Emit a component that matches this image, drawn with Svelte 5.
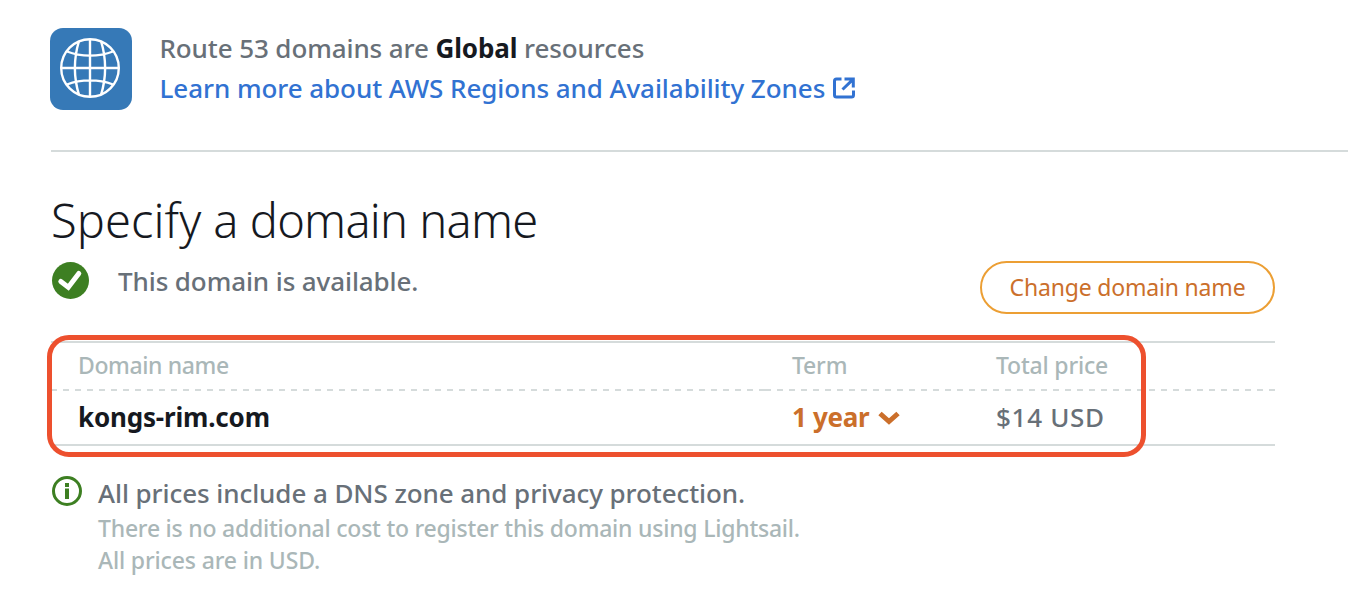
<script>
	let domain = 'kongs-rim.com';
	let term = '1 year';
	let price = '$14 USD';
</script>

<main>
	<header>
		<svg class="globe" viewBox="0 0 82 82" aria-hidden="true">
			<rect width="82" height="82" rx="13" fill="#3679b7" />
			<g fill="none" stroke="#fff" stroke-width="2.4">
				<circle cx="40" cy="40" r="28.8" />
				<path d="M40 11v58M11 40h58M29 13C23.500 31 23.500 49 29 67M51 13C56.500 31 56.500 49 51 67M17 23.500C31 29 49 29 63 23.500M17 56.500C31 51 49 51 63 56.500" />
			</g>
		</svg>
		<div class="intro">
			<p class="scope">Route 53 domains are <b>Global</b> resources</p>
			<a href="#regions">
				<span>Learn more about AWS Regions and Availability Zones</span>
				<svg class="external" viewBox="0 0 22 22" fill="none" stroke="currentColor" stroke-width="3">
					<path d="M8.500 2H3.500Q1.500 2 1.500 4V18Q1.500 20 3.500 20H18.500Q20.500 20 20.500 18V13.500" />
					<path d="M11.500 2H20.300V10.500M20 2.300L9.500 12.500" />
				</svg>
			</a>
		</div>
	</header>

	<section>
		<h1><span>Specify</span> a domain name</h1>
		<div class="status">
			<svg class="check" viewBox="0 0 38 38" aria-hidden="true">
				<circle cx="19.500" cy="19.500" r="18.500" fill="#3d7f22" />
				<path d="M9.800 20.500L17.300 26.300L27.800 12.500" fill="none" stroke="#fff" stroke-width="5" stroke-linecap="round" />
			</svg>
			<span class="available">This domain is available.</span>
			<button><span>Change domain name</span></button>
		</div>

		<div class="table">
			<div class="row head">
				<span class="h-name">Domain name</span>
				<span class="h-term">Term</span>
				<span class="h-price">Total price</span>
			</div>
			<svg class="dashes" width="1224" height="2" aria-hidden="true">
				<path d="M0 1H714M714 1H918M918 1H1224" stroke="#d5dbdb" stroke-width="2" stroke-dasharray="6 6" />
			</svg>
			<div class="row">
				<b class="domain">{domain}</b>
				<span class="term">
					<b>{term}</b>
					<svg viewBox="0 0 22 14" width="22" height="14">
						<path d="M2 2.500L11 10.500L20 2.500" fill="none" stroke="currentColor" stroke-width="5" />
					</svg>
				</span>
				<span class="price">{price}</span>
			</div>
			<div class="highlight"></div>
		</div>

		<div class="note">
			<svg class="info" viewBox="0 0 30 30" fill="none" stroke="#3d7f22" aria-hidden="true">
				<circle cx="15" cy="15" r="13.500" stroke-width="3" />
				<path d="M15 7V11M15 12.500V23" stroke-width="4" />
			</svg>
			<div>
				<p class="lead">All prices include a DNS zone and privacy protection.</p>
				<p class="cost">There is no additional cost to register this domain using Lightsail.</p>
				<p class="usd">All prices are in USD.</p>
			</div>
		</div>
	</section>
</main>

<style>
	:global(body) {
		background: #fff;
	}

	main {
		width: 1348px;
		height: 616px;
		box-sizing: border-box;
		padding-left: 51px;
		overflow: hidden;
		color: #687078;
		font-family: 'Noto Sans', sans-serif;
		font-size: 26px;
		white-space: nowrap;
	}

	p,
	h1 {
		margin: 0;
	}

	header {
		display: flex;
		height: 152px;
		box-sizing: border-box;
		padding-top: 28px;
		border-bottom: 2px solid #d5dbdb;
	}

	.globe {
		width: 82px;
		height: 82px;
		margin-left: -1px;
	}

	.intro {
		margin-left: 27.5px;
		line-height: 40px;
	}

	.scope {
		font-weight: 500;
		letter-spacing: -0.1px;
	}

	.scope b {
		color: #16191f;
	}

	a {
		display: flex;
		align-items: center;
		gap: 7.5px;
		color: #3172d2;
		font-weight: 500;
		letter-spacing: -0.06px;
		text-decoration: none;
	}

	.external {
		width: 22px;
		height: 22px;
	}

	h1 {
		height: 70px;
		margin-top: 33px;
		color: #16191f;
		font-size: 47px;
		font-weight: 300;
		letter-spacing: -0.75px;
		word-spacing: 0.5px;
		line-height: 70px;
	}

	h1 span {
		letter-spacing: 0.1px;
	}

	.status {
		display: flex;
		align-items: flex-start;
		width: 1224px;
		height: 86px;
		padding-top: 6px;
		box-sizing: border-box;
	}

	.check {
		width: 38px;
		height: 38px;
	}

	.available {
		margin-left: 29px;
		font-weight: 500;
		letter-spacing: -0.1px;
		line-height: 40px;
	}

	button {
		width: 295px;
		height: 53px;
		margin-left: auto;
		padding: 0 0 1px;
		border: 2px solid #ec9f34;
		border-radius: 27px;
		background: #fff;
		color: #cb6f2b;
		font: 400 23px 'Noto Sans', sans-serif;
		letter-spacing: -0.18px;
	}

	.table {
		position: relative;
		width: 1224px;
		height: 105px;
		box-sizing: border-box;
		border-top: 2px solid #d5dbdb;
		border-bottom: 2px solid #d5dbdb;
	}

	.row {
		display: grid;
		grid-template-columns: 714px 204px 1fr;
		height: 53px;
		padding-left: 27px;
		line-height: 53px;
	}

	.head {
		height: 46px;
		color: #aab7b8;
		font-size: 23px;
		font-weight: 500;
		letter-spacing: -0.2px;
		line-height: 45px;
	}

	.h-name {
		letter-spacing: -0.38px;
	}

	.dashes {
		display: block;
	}

	.domain {
		color: #16191f;
		letter-spacing: -0.18px;
	}

	.term {
		display: flex;
		align-items: center;
		gap: 9px;
		color: #cb6f2b;
		letter-spacing: -0.3px;
	}

	.price {
		font-weight: 500;
		letter-spacing: 0.7px;
	}

	.highlight {
		position: absolute;
		top: -8px;
		left: -4px;
		width: 1099px;
		height: 122px;
		box-sizing: border-box;
		border: 5px solid #ed502e;
		border-radius: 22px;
	}

	.note {
		display: flex;
		gap: 16px;
		padding-top: 30px;
	}

	.info {
		width: 30px;
		height: 30px;
		margin-left: 1px;
	}

	.lead {
		height: 36px;
		font-weight: 500;
		letter-spacing: -0.07px;
		line-height: 34px;
	}

	.cost,
	.usd {
		color: #aab7b8;
		font-size: 23px;
		font-weight: 500;
		letter-spacing: -0.23px;
		line-height: 32px;
	}

	.usd {
		letter-spacing: -0.15px;
	}
</style>
